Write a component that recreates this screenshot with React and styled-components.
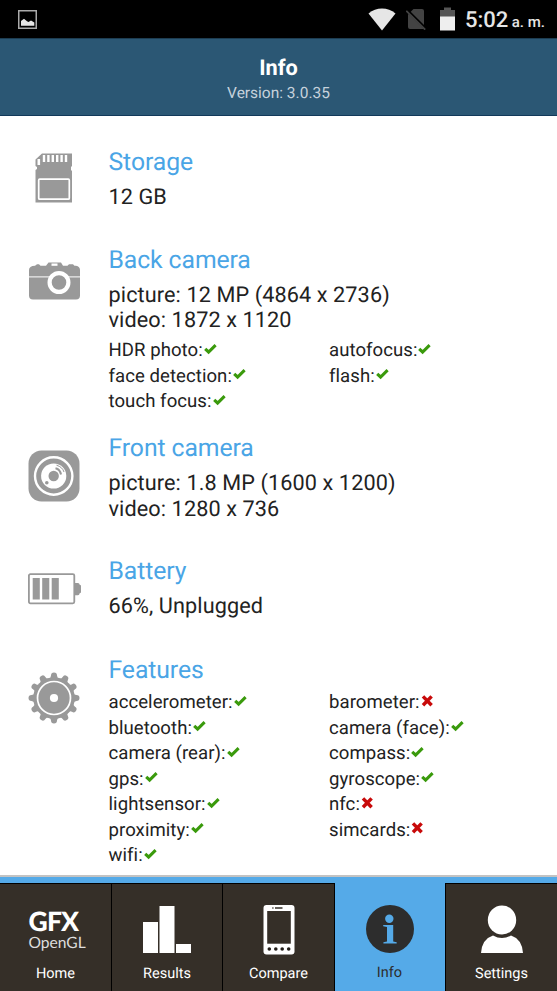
import React from 'react';
import styled, { createGlobalStyle } from 'styled-components';

const GlobalStyle = createGlobalStyle`
  * {
    box-sizing: border-box;
  }

  body {
    margin: 0;
    background: #fff;
    font-family: Roboto, 'Liberation Sans', sans-serif;
    color: #222;
    text-rendering: geometricPrecision;
  }

  svg {
    display: block;
  }
`;

const backCamera = [
  ['HDR photo', true],
  ['autofocus', true],
  ['face detection', true],
  ['flash', true],
  ['touch focus', true],
];

const features = [
  ['accelerometer', true],
  ['barometer', false],
  ['bluetooth', true],
  ['camera (face)', true],
  ['camera (rear)', true],
  ['compass', true],
  ['gps', true],
  ['gyroscope', true],
  ['lightsensor', true],
  ['nfc', false],
  ['proximity', true],
  ['simcards', false],
  ['wifi', true],
];

/**
 * Status bar icons
 */
const PictureIcon = () => (
  <svg width="19" height="19" viewBox="0 0 19 19">
    <rect x="0.75" y="0.75" width="17.5" height="17.5" fill="none" stroke="#aaa" strokeWidth="1.5" />
    <path d="M3 15.7V11L6 8.8L9 11.3L10.5 12L13 10.5L16.3 12.5V15.7Z" fill="#e6e6e6" />
  </svg>
);

const WifiIcon = () => (
  <svg width="28" height="23" viewBox="0 0 28 23">
    <path d="M0.5 5.5Q6.5 0.5 14 0.5T27.5 5.5L14 22.5Z" fill="#e6e6e6" />
  </svg>
);

const NoSimIcon = () => (
  <svg width="20" height="21" viewBox="0 0 20 21">
    <path d="M7.5 0H16Q18 0 18 2V20H4Q2 20 2 18V5.5Z" fill="#434343" />
    <path d="M0.8 1L20 20" stroke="#000" strokeWidth="3" />
    <path d="M0.3 1.8L19.2 20.6" stroke="#434343" strokeWidth="1.8" />
  </svg>
);

const BatteryStatusIcon = () => (
  <svg width="15" height="24" viewBox="0 0 15 24">
    <path d="M0 10V3H4V0.5H11V3H15V10Z" fill="#555" />
    <rect y="9.5" width="15" height="14" fill="#eee" />
  </svg>
);

/**
 * Section icons
 */
const StorageIcon = () => (
  <svg width="38" height="50" viewBox="0 0 38 50">
    <path d="M7 0.5H37V13L36 14V17L37 18V49.5H0.5V17L2 16V14L0.5 13V6.5Z" fill="#999" />
    <path d="M9 2v7M13.4 2v7M17.8 2v7M22.2 2v7M26.6 2v7M31 2v7" stroke="#fff" strokeWidth="2.4" />
    <path d="M3.8 6v6" stroke="#fff" strokeWidth="2.6" />
    <rect x="3.7" y="26.2" width="30.6" height="20" rx="1" fill="none" stroke="#fff" strokeWidth="1.7" />
  </svg>
);

const BackCameraIcon = () => (
  <svg width="51" height="38" viewBox="0 0 51 38">
    <path
      d="M6 3.8L8 2.3H10L11.5 3.8H17L19.5 0.5H32L34 3.8H38.5L40 2.3H44L45.5 3.8H47Q51 4.5 51 8V33.5Q51 37.5 47 37.5H4Q0 37.5 0 33.5V8Q0 4 6 3.8Z"
      fill="#999"
    />
    <path d="M0 14.9H51" stroke="#fff" strokeWidth="1" />
    <rect x="22.5" y="1.5" width="6" height="2.3" fill="#fff" />
    <circle cx="30" cy="20.5" r="9.4" fill="#999" stroke="#fff" strokeWidth="4.2" />
  </svg>
);

const FrontCameraIcon = () => (
  <svg width="52" height="52" viewBox="0 0 52 52">
    <rect x="0.5" y="0.5" width="51" height="51" rx="13" fill="#999" />
    <circle cx="25.7" cy="26" r="18.7" fill="none" stroke="#fff" strokeWidth="2.4" />
    <circle cx="25.7" cy="26" r="12.6" fill="#fff" />
    <circle cx="25.7" cy="26" r="5.2" fill="#999" />
    <path d="M27.5 18.2Q32 19.2 33 24.5" fill="none" stroke="#999" strokeWidth="2" />
    <path d="M28.5 15.2Q34.5 17 36 22" fill="none" stroke="#999" strokeWidth="1" />
    <circle cx="18.8" cy="32.8" r="1.8" fill="#999" />
  </svg>
);

const BatteryIcon = () => (
  <svg width="53" height="32" viewBox="0 0 53 32">
    <rect x="0.9" y="1.1" width="45.4" height="29.2" rx="1.5" fill="none" stroke="#999" strokeWidth="1.8" />
    <path d="M4.7 5h7.1v21.5h-7.1zM14.2 5h7.1v21.5h-7.1zM23.7 5h7.1v21.5h-7.1z" fill="#999" />
    <path d="M47 10H50Q51.5 10 51.5 11.5L53 12.5V19.5L51.5 20.5Q51.5 22.3 50 22.3H47Z" fill="#999" />
  </svg>
);

const teeth = Array.from({ length: 12 }, (_, i) => i * 30);

const GearIcon = () => (
  <svg width="52" height="52" viewBox="-26 -26 52 52">
    <circle r="20.8" fill="#999" />
    {teeth.map((angle) => (
      <path
        key={angle}
        transform={`rotate(${angle})`}
        d="M-5.5 -19Q-3 -20 -3 -22.5A3 3 0 0 1 3 -22.5Q3 -20 5.5 -19Z"
        fill="#999"
      />
    ))}
    <circle r="16.5" fill="none" stroke="#fff" strokeWidth="1.7" />
    <circle r="4.1" fill="#fff" />
  </svg>
);

/**
 * Yes / no marks
 */
const CheckMark = () => (
  <svg width="13" height="12" viewBox="0 0 13 12">
    <path d="M1.2 5.9L4.6 9L11.6 2.2" fill="none" stroke="#3a9a0c" strokeWidth="3.1" />
  </svg>
);

const CrossMark = () => (
  <svg width="13" height="12" viewBox="0 0 13 12">
    <path d="M2 1.4L10.6 10.2M10.6 1.4L2 10.2" stroke="#c80a0a" strokeWidth="3.5" />
  </svg>
);

/**
 * Tab icons
 */
const GfxLogo = () => (
  <Logo>
    <LogoName>GFX</LogoName>
    <LogoApi>OpenGL</LogoApi>
  </Logo>
);

const ResultsIcon = () => (
  <svg width="48" height="54" viewBox="0 0 48 54" fill="#fff">
    <path d="M0 19h15v31h-15zM16.5 3h15v47h-15zM33 41h15v9h-15z" />
  </svg>
);

const CompareIcon = () => (
  <svg width="32" height="54" viewBox="0 0 32 54">
    <rect x="0.5" y="2" width="31" height="49.5" rx="3" fill="#fff" />
    <rect x="4.2" y="8" width="23.6" height="32.7" fill="#352f28" />
    <path d="M12 5h7.5M9.3 5h1.2" stroke="#352f28" strokeWidth="1.4" />
    <g fill="#221d18">
      <circle cx="6.3" cy="46" r="1.8" />
      <circle cx="12.8" cy="46" r="1.8" />
      <circle cx="19.2" cy="46" r="1.8" />
      <circle cx="25.7" cy="46" r="1.8" />
    </g>
  </svg>
);

const InfoIcon = () => (
  <svg width="48" height="54" viewBox="0 0 48 54">
    <circle cx="24" cy="26" r="24" fill="#2d2d2d" />
    <circle cx="23.3" cy="15.8" r="4.2" fill="#55aae8" />
    <path d="M17.2 22H27.2V38.5L30.7 39.3V40.5H17.4V39.3L21 38.5V24L17.2 23.3Z" fill="#55aae8" />
  </svg>
);

const UserIcon = () => (
  <svg width="42" height="54" viewBox="0 0 42 54" fill="#fff">
    <ellipse cx="21" cy="17" rx="14.2" ry="14.5" />
    <path d="M0 50Q1 36 12 32.5Q21 37.5 30 32.5Q41 36 42 50Z" />
  </svg>
);

const tabs = [
  { label: 'Home', icon: GfxLogo },
  { label: 'Results', icon: ResultsIcon },
  { label: 'Compare', icon: CompareIcon },
  { label: 'Info', icon: InfoIcon, active: true },
  { label: 'Settings', icon: UserIcon },
];

const FlagList = ({ items }) => (
  <Flags>
    {items.map(([name, ok]) => (
      <Flag key={name}>
        {name}:
        <Mark>{ok ? <CheckMark /> : <CrossMark />}</Mark>
      </Flag>
    ))}
  </Flags>
);

const InfoSection = ({ title, icon, lines, flags, height, iconTop }) => (
  <Section $height={height}>
    <IconCell $top={iconTop}>{icon}</IconCell>
    <div>
      <SectionTitle>{title}</SectionTitle>
      {lines && (
        <Lines>
          {lines.map((line) => (
            <Line key={line}>{line}</Line>
          ))}
        </Lines>
      )}
      {flags && <FlagList items={flags} />}
    </div>
  </Section>
);

const App = () => {
  return (
    <Screen>
      <GlobalStyle />
      <StatusBar>
        <PictureIcon />
        <StatusRight>
          <WifiIcon />
          <NoSimIcon />
          <BatteryStatusIcon />
          <Clock>
            5:02 <small>a. m.</small>
          </Clock>
        </StatusRight>
      </StatusBar>

      <Header>
        <HeaderTitle>Info</HeaderTitle>
        <Version>Version: 3.0.35</Version>
      </Header>

      <Content>
        <InfoSection title="Storage" icon={<StorageIcon />} lines={['12 GB']} height={98.3} iconTop={5} />
        <InfoSection
          title="Back camera"
          icon={<BackCameraIcon />}
          lines={['picture: 12 MP (4864 x 2736)', 'video: 1872 x 1120']}
          flags={backCamera}
          height={188.2}
          iconTop={16}
        />
        <InfoSection
          title="Front camera"
          icon={<FrontCameraIcon />}
          lines={['picture: 1.8 MP (1600 x 1200)', 'video: 1280 x 736']}
          height={123}
          iconTop={16}
        />
        <InfoSection title="Battery" icon={<BatteryIcon />} lines={['66%, Unplugged']} height={98.3} iconTop={15.5} />
        <InfoSection title="Features" icon={<GearIcon />} flags={features} height={220} iconTop={16.5} />
      </Content>

      <TabBar>
        {tabs.map(({ label, icon: Icon, active }) => (
          <Tab key={label} $active={active}>
            <Icon />
            <TabLabel $active={active}>{label}</TabLabel>
          </Tab>
        ))}
      </TabBar>
    </Screen>
  );
};

const Screen = styled.div`
  display: flex;
  flex-direction: column;
  width: 557px;
  height: 991px;
  overflow: hidden;
  background: #fff;
`;

const StatusBar = styled.div`
  display: flex;
  align-items: center;
  justify-content: space-between;
  height: 38px;
  padding: 0 12px 0 18px;
  background: #000;
`;

const StatusRight = styled.div`
  display: flex;
  align-items: center;
  gap: 10px;

  svg:nth-child(3) {
    margin-left: 4px;
  }
`;

const Clock = styled.div`
  padding-top: 5px;
  font-size: 22px;
  font-weight: 500;
  line-height: 33px;
  word-spacing: -2px;
  color: #e6e6e6;
  white-space: nowrap;

  small {
    font-size: 15px;
    word-spacing: 0;
  }
`;

const Header = styled.header`
  height: 78px;
  padding-top: 17px;
  text-align: center;
  color: #fff;
  background: #2b5774;
  border-top: 1px solid #1d3d52;
  border-bottom: 1px solid #12395a;
`;

const HeaderTitle = styled.h1`
  margin: 0;
  font-size: 21.7px;
  line-height: 26px;
  font-weight: 700;
`;

const Version = styled.div`
  font-size: 15.5px;
  line-height: 23px;
  color: #c6d2dc;
`;

const Content = styled.main`
  flex: 1;
  min-height: 0;
  padding-top: 32px;
  overflow: hidden;
`;

const Section = styled.section`
  display: grid;
  grid-template-columns: 108.5px 1fr;
  height: ${(props) => props.$height}px;
`;

const IconCell = styled.div`
  display: flex;
  justify-content: center;
  padding-top: ${(props) => props.$top}px;
`;

const SectionTitle = styled.h2`
  margin: 0;
  font-size: 24.75px;
  line-height: 30px;
  letter-spacing: -0.08px;
  font-weight: 400;
  color: #4aa5e6;
`;

const Lines = styled.div`
  padding: 6.5px 0 0;
`;

const Line = styled.div`
  font-size: 21.66px;
  line-height: 25.6px;
  letter-spacing: 0.1px;
`;

const Flags = styled.div`
  display: grid;
  grid-template-columns: 220.5px 1fr;
  padding-top: 4.5px;
`;

const Flag = styled.div`
  display: flex;
  font-size: 18.57px;
  line-height: 25.5px;
  letter-spacing: 0.06px;
`;

const Mark = styled.span`
  padding: 4.5px 0 0 1px;
`;

const TabBar = styled.nav`
  display: grid;
  grid-template-columns: 112px 111px 112px 110px 112px;
  height: 116px;
  background: #55aae8;
  border-top: 2px solid #c3c3c3;
  padding-top: 6px;
`;

const Tab = styled.div`
  display: flex;
  flex-direction: column;
  align-items: center;
  padding-top: 19px;
  background: ${(props) => (props.$active ? '#55aae8' : '#352f28')};
  border: 0 solid ${(props) => (props.$active ? '#55aae8' : '#000')};
  border-top-width: 1px;
  border-right-width: 1px;

  &:last-child {
    border-width: 1px 0 0 1px;
  }
`;

const TabLabel = styled.span`
  margin-top: ${(props) => (props.$active ? 6 : 7)}px;
  font-size: 14.5px;
  line-height: 20px;
  color: ${(props) => (props.$active ? '#2d2d2d' : '#fff')};
`;

const Logo = styled.div`
  width: 54px;
  height: 54px;
  padding-top: 5px;
  font-family: Lato, sans-serif;
  white-space: nowrap;
`;

const LogoName = styled.div`
  font-size: 26.5px;
  line-height: 26px;
  font-weight: 900;
  letter-spacing: -0.8px;
  color: #fff;
`;

const LogoApi = styled.div`
  font-size: 15.6px;
  line-height: 19px;
  color: #ddd;
`;

export default App;
